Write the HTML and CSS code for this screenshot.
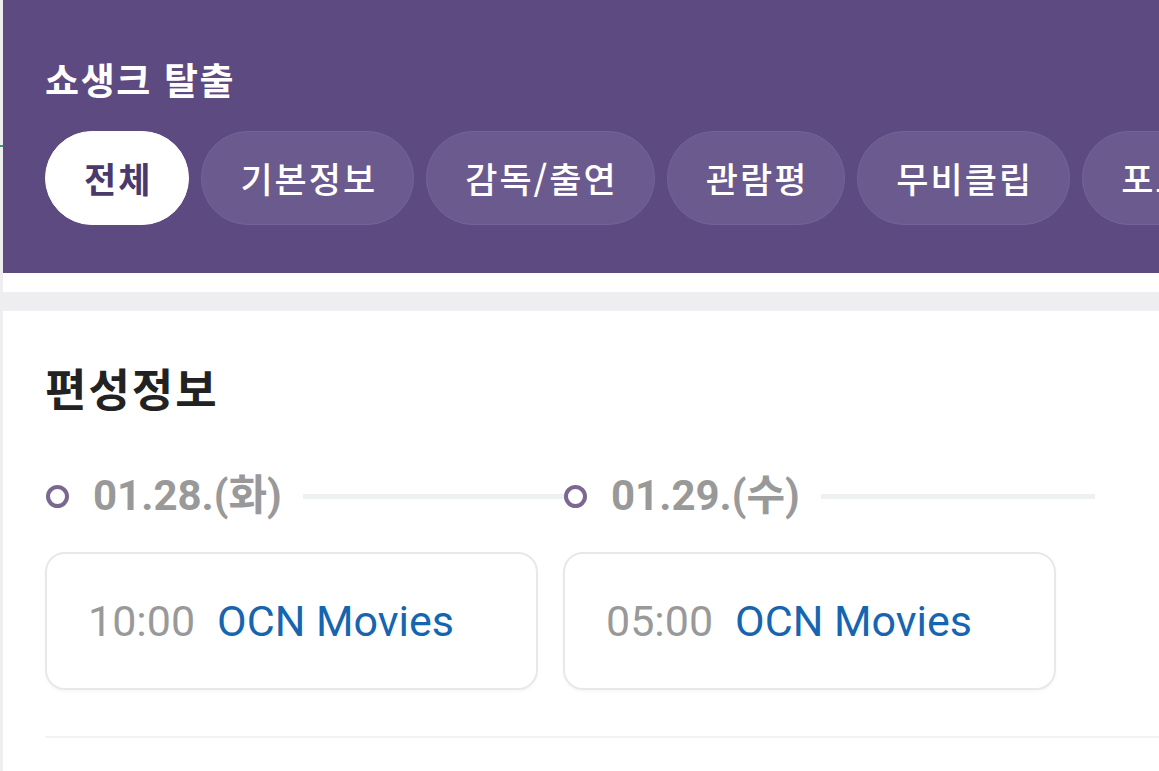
FILE: index.html
```html
<!DOCTYPE html>
<html lang="ko">
<head>
<meta charset="utf-8">
<title>쇼생크 탈출</title>
<link rel="stylesheet" href="styles.css">
</head>
<body>
<div class="edge-mark"></div>
<div class="top">
  <header class="header">
    <h1 class="title">쇼생크 탈출</h1>
    <nav class="tabs">
      <span class="tab active">전체</span>
      <span class="tab">기본정보</span>
      <span class="tab">감독/출연</span>
      <span class="tab">관람평</span>
      <span class="tab">무비클립</span>
      <span class="tab">포토</span>
    </nav>
  </header>
</div>
<section class="section">
  <h2 class="heading">편성정보</h2>
  <div class="schedule">
    <div class="day">
      <div class="day-head">
        <span class="dot"></span>
        <span class="date">01.28.(화)</span>
        <span class="line"></span>
      </div>
      <div class="card">
        <span class="time">10:00</span>
        <span class="channel">OCN Movies</span>
      </div>
    </div>
    <div class="day last">
      <div class="day-head">
        <span class="dot"></span>
        <span class="date">01.29.(수)</span>
        <span class="line"></span>
      </div>
      <div class="card">
        <span class="time">05:00</span>
        <span class="channel">OCN Movies</span>
      </div>
    </div>
  </div>
  <div class="divider"></div>
</section>
</body>
</html>
```

FILE: styles.css
```css
html, body {
  margin: 0;
  padding: 0;
}
body {
  background: #eeeef1;
  padding-left: 3px;
  height: 771px;
  overflow: hidden;
  position: relative;
  font-family: Roboto, "Noto Sans CJK KR", sans-serif;
}
.edge-mark {
  position: absolute;
  left: 0;
  top: 145px;
  width: 3px;
  height: 2px;
  background: #3f9a70;
}
.top {
  background: #ffffff;
  padding-bottom: 19px;
}
.header {
  background: #5d4a81;
  padding: 54px 0 48px 42px;
  overflow: hidden;
}
.title {
  margin: 0;
  font-family: "Noto Sans CJK KR", sans-serif;
  font-size: 37px;
  font-weight: 700;
  letter-spacing: 1.6px;
  line-height: 50px;
  color: #ffffff;
}
.tabs {
  margin-top: 27px;
  display: flex;
  gap: 12px;
  white-space: nowrap;
}
.tab {
  flex-shrink: 0;
  box-sizing: border-box;
  height: 94px;
  padding: 0 36px 0 38px;
  display: flex;
  align-items: center;
  border-radius: 47px;
  background: #6b5a8e;
  border: 1px solid #74639a;
  color: #ffffff;
  font-family: "Noto Sans CJK KR", sans-serif;
  font-size: 35px;
  font-weight: 500;
  letter-spacing: 2px;
  line-height: 40px;
}
.tab.active {
  background: #ffffff;
  border-color: #ffffff;
  color: #4a3a6b;
  font-weight: 700;
}
.section {
  margin-top: 19px;
  background: #ffffff;
  padding: 46px 0 0 42px;
  height: 414px;
}
.heading {
  margin: 0;
  font-family: "Noto Sans CJK KR", sans-serif;
  font-size: 45px;
  font-weight: 700;
  letter-spacing: 2px;
  line-height: 62px;
  color: #222222;
}
.schedule {
  margin-top: 47px;
  display: flex;
}
.day {
  width: 518px;
  flex-shrink: 0;
}
.day-head {
  display: flex;
  align-items: center;
  height: 60px;
}
.dot {
  position: relative;
  z-index: 1;
  box-sizing: border-box;
  width: 23px;
  height: 23px;
  margin-left: 1px;
  border: 4px solid #7a6892;
  border-radius: 50%;
  background: #ffffff;
  flex-shrink: 0;
}
.date {
  margin-left: 24px;
  font-size: 42px;
  font-weight: 700;
  line-height: 60px;
  color: #999999;
  white-space: nowrap;
}
.line {
  flex: 1;
  height: 5px;
  margin-left: 21px;
  margin-right: -20px;
  background: #edf1f2;
}
.day.last .line {
  margin-right: -14px;
}
.card {
  margin-top: 26px;
  box-sizing: border-box;
  width: 493px;
  height: 138px;
  border: 2px solid #e8e8e8;
  border-radius: 20px;
  box-shadow: 0 2px 3px rgba(0, 0, 0, 0.03);
  padding-left: 41px;
  display: flex;
  align-items: center;
  font-size: 43px;
  line-height: 50px;
}
.time {
  color: #999999;
}
.channel {
  margin-left: 22px;
  color: #1565b0;
}
.divider {
  margin-top: 46px;
  height: 2px;
  background: #f1f3f4;
}
```
